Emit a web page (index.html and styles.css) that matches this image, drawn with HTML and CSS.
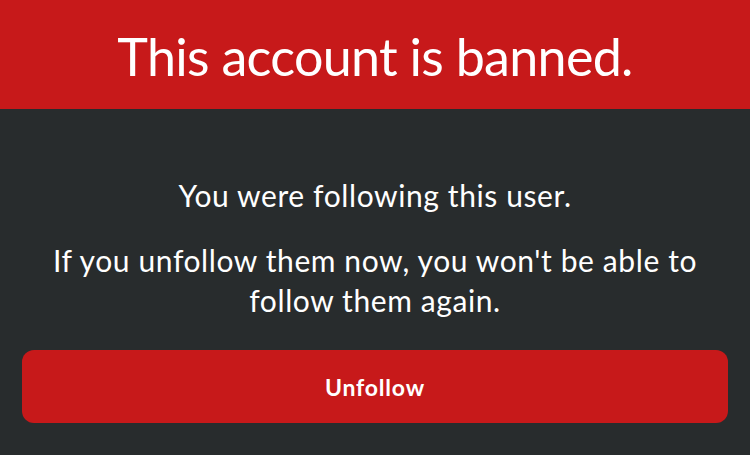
FILE: index.html
```html
<!DOCTYPE html>
<html lang="en">
<head>
    <meta charset="UTF-8">
    <meta name="viewport" content="width=device-width, initial-scale=1.0">
    <title>Account banned</title>
    <link rel="stylesheet" href="styles.css">
</head>
<body>
    <div class="banner">
        <h1>This account is banned.</h1>
    </div>

    <div class="content">
        <p>You were following this user.</p>
        <p>If you unfollow them now, you won't be able to follow them again.</p>
        <button class="unfollow">Unfollow</button>
    </div>
</body>
</html>
```

FILE: styles.css
```css
body {
    font-family: Lato, "Noto Sans", sans-serif;
    margin: 0;
    height: 100vh;
    background: #282c2d;
    color: #fff;
    overflow: hidden;
}

.banner {
    background: #c7191a;
    height: 109px;
    display: flex;
    align-items: center;
    justify-content: center;
}

.banner h1 {
    margin: 0;
    font-size: 52px;
    font-weight: 400;
    letter-spacing: -0.7px;
    line-height: 1;
    padding-top: 2px;
}

.content {
    padding: 66px 22px 0;
    text-align: center;
}

.content p {
    margin: 0 0 25px;
    font-size: 30px;
    line-height: 40px;
    letter-spacing: 0.6px;
    padding: 0 20px;
}

.unfollow {
    display: block;
    width: 100%;
    height: 73px;
    margin-top: 30px;
    background: #c7191a;
    color: #fff;
    border: none;
    border-radius: 12px;
    font-family: inherit;
    font-size: 23px;
    font-weight: 700;
    letter-spacing: 0.8px;
}
```
